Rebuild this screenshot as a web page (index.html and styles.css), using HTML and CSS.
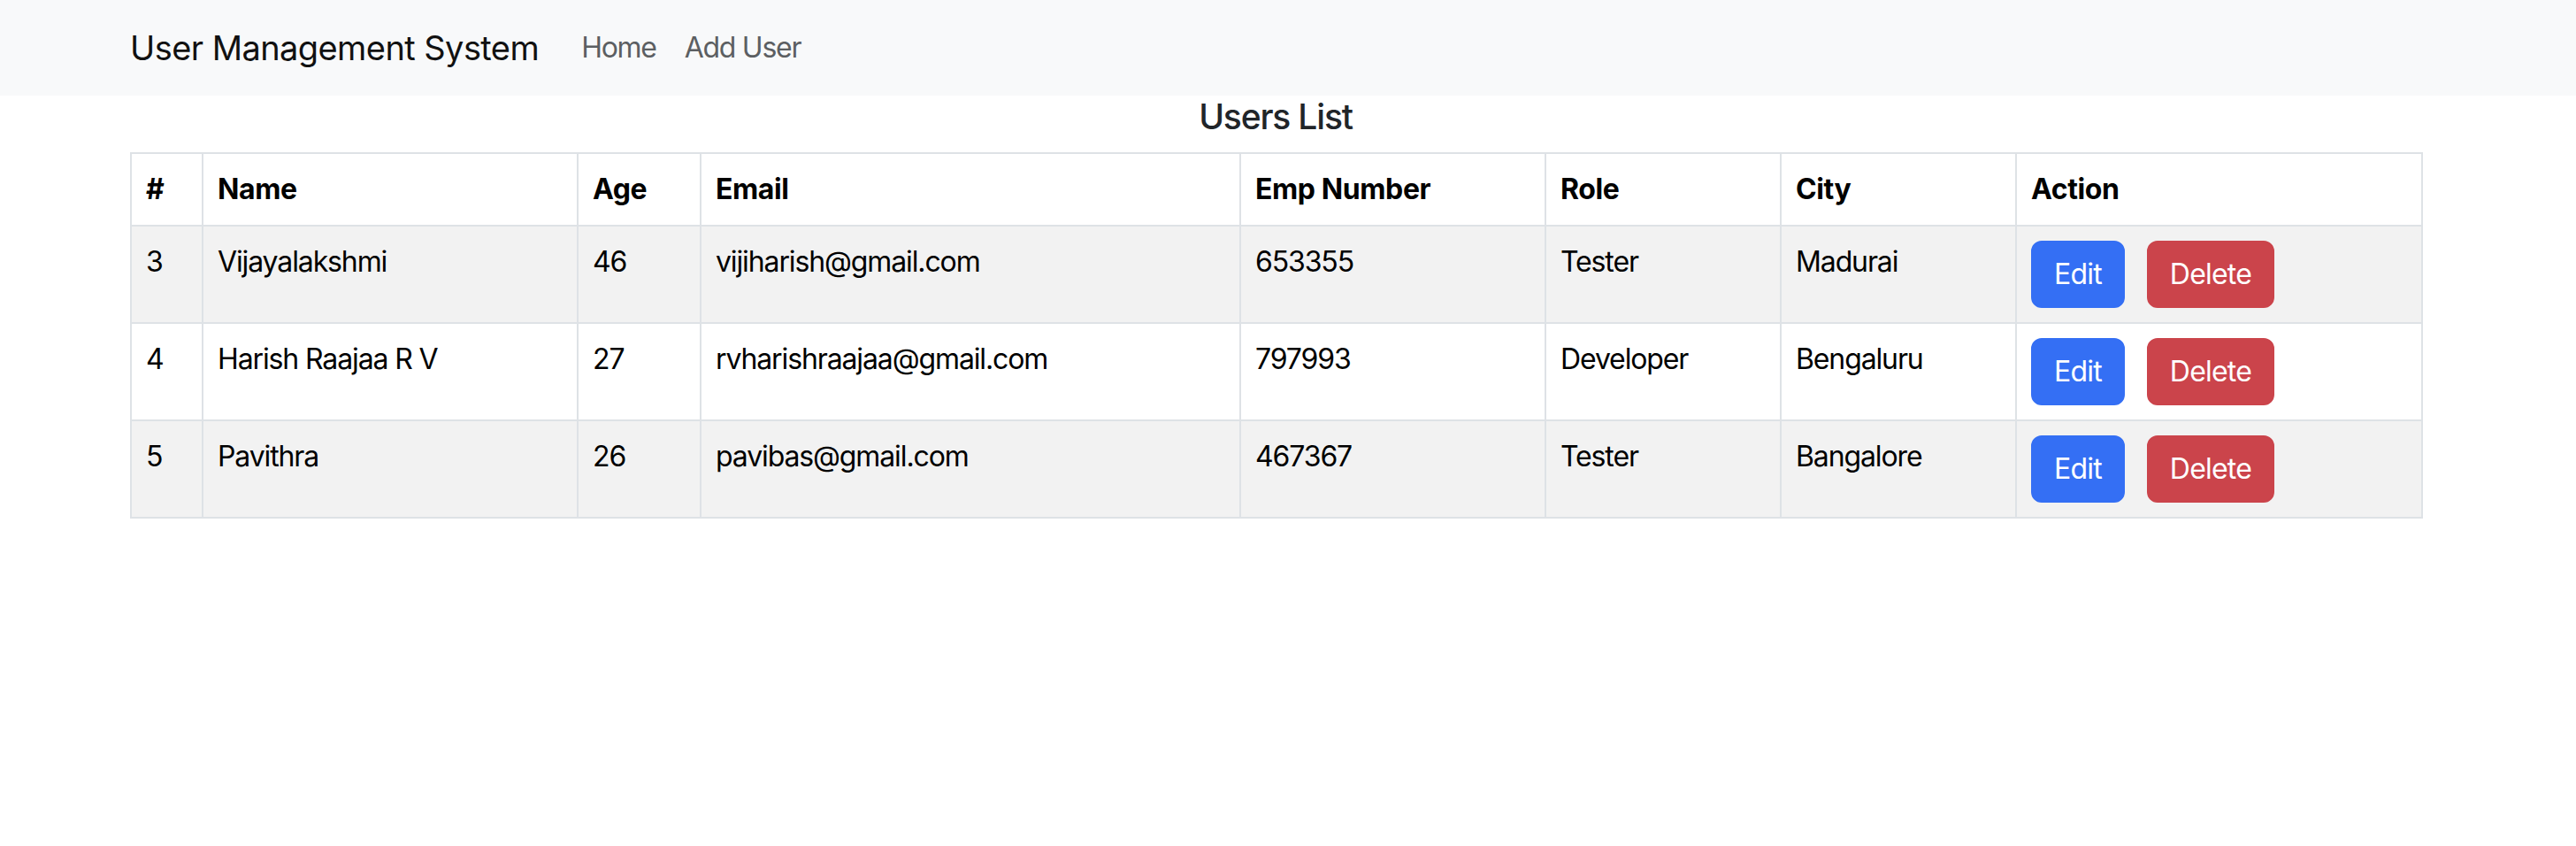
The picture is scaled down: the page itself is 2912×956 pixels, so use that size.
FILE: index.html
```html
<!DOCTYPE html>
<html lang="en">
<head>
<meta charset="utf-8">
<title>User Management System</title>
<link rel="stylesheet" href="styles.css">
</head>
<body>
<nav class="navbar">
  <div class="nav-inner">
    <a class="brand" href="#">User Management System</a>
    <ul class="nav-links">
      <li><a class="nav-link" href="#">Home</a></li>
      <li><a class="nav-link" href="#">Add User</a></li>
    </ul>
  </div>
</nav>
<main class="container">
  <h5 class="title">Users List</h5>
  <table class="users">
    <colgroup>
      <col class="c-id"><col class="c-name"><col class="c-age"><col class="c-email">
      <col class="c-emp"><col class="c-role"><col class="c-city"><col class="c-action">
    </colgroup>
    <thead>
      <tr><th>#</th><th>Name</th><th>Age</th><th>Email</th><th>Emp Number</th><th>Role</th><th>City</th><th>Action</th></tr>
    </thead>
    <tbody>
      <tr>
        <td>3</td><td>Vijayalakshmi</td><td>46</td><td>vijiharish@gmail.com</td><td>653355</td><td>Tester</td><td>Madurai</td>
        <td><div class="actions"><button class="btn btn-edit">Edit</button><button class="btn btn-delete">Delete</button></div></td>
      </tr>
      <tr>
        <td>4</td><td>Harish Raajaa R V</td><td>27</td><td>rvharishraajaa@gmail.com</td><td>797993</td><td>Developer</td><td>Bengaluru</td>
        <td><div class="actions"><button class="btn btn-edit">Edit</button><button class="btn btn-delete">Delete</button></div></td>
      </tr>
      <tr>
        <td>5</td><td>Pavithra</td><td>26</td><td>pavibas@gmail.com</td><td>467367</td><td>Tester</td><td>Bangalore</td>
        <td><div class="actions"><button class="btn btn-edit">Edit</button><button class="btn btn-delete">Delete</button></div></td>
      </tr>
    </tbody>
  </table>
</main>
</body>
</html>
```

FILE: styles.css
```css
* { box-sizing: border-box; }

html, body {
  margin: 0;
  padding: 0;
  background: #ffffff;
  font-family: Inter, "Noto Sans", "Liberation Sans", sans-serif;
  letter-spacing: -0.025em;
  color: #000;
}

.navbar {
  height: 108px;
  background: #f8f9fa;
  display: flex;
  align-items: center;
}

.nav-inner {
  margin-left: 147px;
  display: flex;
  align-items: center;
}

.brand {
  font-size: 38px;
  letter-spacing: -0.015em;
  line-height: 56px;
  color: #111;
  text-decoration: none;
  margin-right: 32px;
}

.nav-links {
  list-style: none;
  margin: 0;
  padding: 0;
  display: flex;
}

.nav-link {
  display: block;
  padding: 0 16px;
  font-size: 32px;
  letter-spacing: -0.04em;
  line-height: 48px;
  color: #5c5f62;
  text-decoration: none;
}

.container {
  width: 2590px;
  margin-left: 147px;
}

.title {
  margin: 0 0 16px 0;
  text-align: center;
  font-size: 39px;
  letter-spacing: -0.03em;
  line-height: 48px;
  font-weight: 500;
  color: #212529;
}

.users {
  width: 2590px;
  table-layout: fixed;
  border-collapse: collapse;
  font-size: 32px;
  line-height: 48px;
}

.c-id { width: 81px; }
.c-name { width: 424px; }
.c-age { width: 139px; }
.c-email { width: 610px; }
.c-emp { width: 345px; }
.c-role { width: 266px; }
.c-city { width: 266px; }
.c-action { width: 459px; }

.users th,
.users td {
  border: 2px solid #dee2e6;
  padding: 16px 16px;
  text-align: left;
  vertical-align: top;
  white-space: nowrap;
}

.users th {
  font-weight: 700;
}

.users td {
  letter-spacing: -0.035em;
}

.users tbody tr:nth-child(odd) {
  background: #f2f2f2;
}

.actions {
  display: flex;
  gap: 25px;
}

.btn {
  font-family: inherit;
  letter-spacing: -0.025em;
  font-size: 32px;
  line-height: 48px;
  padding: 12px 24px;
  border: 2px solid transparent;
  border-radius: 12px;
  color: #fff;
  cursor: pointer;
}

.btn-edit {
  background: #346ff4;
  border-color: #346ff4;
}

.btn-delete {
  background: #cb444b;
  border-color: #cb444b;
}
```
